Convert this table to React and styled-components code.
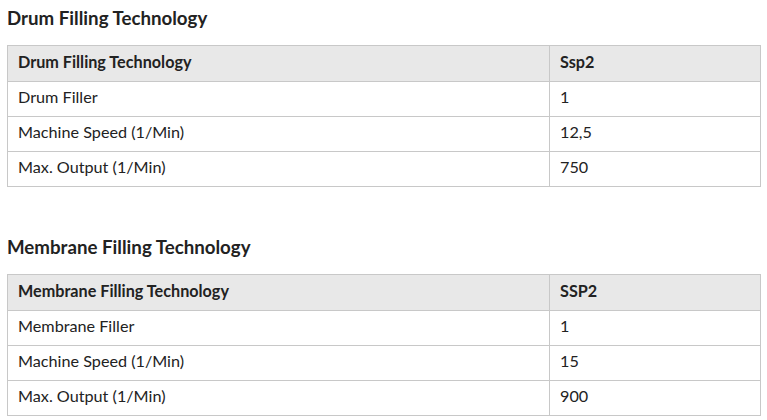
import React from "react"
import styled, { createGlobalStyle } from "styled-components"

const GlobalStyle = createGlobalStyle`
  html, body {
    margin: 0;
    padding: 0;
    background: #ffffff;
  }
  body {
    font-family: "Lato", "Liberation Sans", sans-serif;
    color: #222222;
  }
`

const Page = styled.div`
  padding: 7px 7px 0 7px;
  display: flex;
  flex-direction: column;
  gap: 49px;
`

const Section = styled.section`
  display: flex;
  flex-direction: column;
  gap: 16px;
`

const SectionTitle = styled.h2`
  margin: 0;
  font-size: 18.7px;
  line-height: 22px;
  font-weight: 700;
  color: #222222;
`

const SpecTable = styled.table`
  width: 754px;
  border-collapse: collapse;
  table-layout: fixed;
  font-size: 16.2px;
`

const Cell = styled.td`
  border: 1px solid #c8c8c8;
  padding: ${p => (p.$head ? "6px 10px 9px 10px" : "5px 10px 9px 10px")};
  line-height: 20px;
  height: 20px;
  text-align: left;
  vertical-align: top;
  white-space: nowrap;
  font-weight: ${p => (p.$head ? 700 : 400)};
  background: ${p => (p.$head ? "#e8e8e8" : "#ffffff")};
  color: #222222;
`

const LabelCol = styled.col`
  width: 542px;
`

const sections = [
  {
    title: "Drum Filling Technology",
    model: "Ssp2",
    rows: [
      ["Drum Filler", "1"],
      ["Machine Speed (1/Min)", "12,5"],
      ["Max. Output (1/Min)", "750"],
    ],
  },
  {
    title: "Membrane Filling Technology",
    model: "SSP2",
    rows: [
      ["Membrane Filler", "1"],
      ["Machine Speed (1/Min)", "15"],
      ["Max. Output (1/Min)", "900"],
    ],
  },
]

const App = () => (
  <>
    <GlobalStyle />
    <Page>
      {sections.map(s => (
        <Section key={s.title}>
          <SectionTitle>{s.title}</SectionTitle>
          <SpecTable>
            <colgroup>
              <LabelCol />
              <col />
            </colgroup>
            <thead>
              <tr>
                <Cell as="th" $head>{s.title}</Cell>
                <Cell as="th" $head>{s.model}</Cell>
              </tr>
            </thead>
            <tbody>
              {s.rows.map(([label, value]) => (
                <tr key={label}>
                  <Cell>{label}</Cell>
                  <Cell>{value}</Cell>
                </tr>
              ))}
            </tbody>
          </SpecTable>
        </Section>
      ))}
    </Page>
  </>
)

export default App
